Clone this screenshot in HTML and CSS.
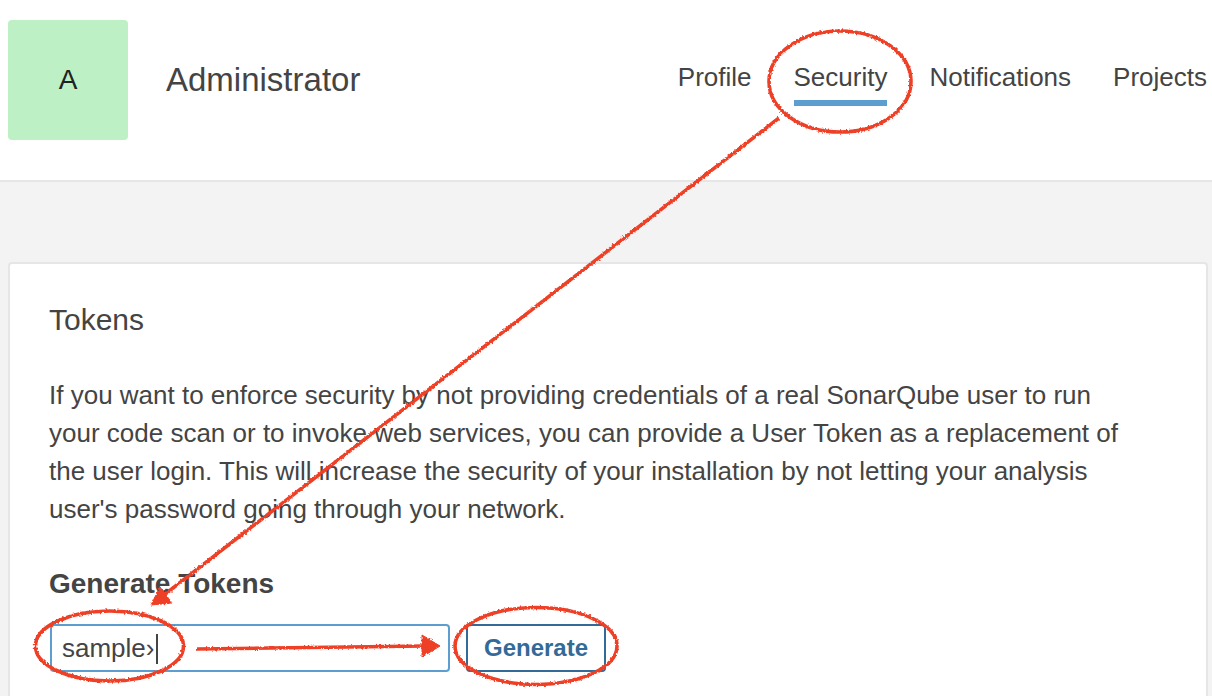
FILE: index.html
```html
<!DOCTYPE html>
<html lang="en">
<head>
<meta charset="utf-8">
<title>Administrator - Security</title>
<meta name="viewport" content="width=device-width">
<link rel="stylesheet" href="styles.css">
</head>
<body>
<header class="account-header">
  <div class="avatar">A</div>
  <h1 class="account-name">Administrator</h1>
  <nav class="account-nav">
    <a href="#profile">Profile</a>
    <a href="#security" class="active" aria-current="page">Security</a>
    <a href="#notifications">Notifications</a>
    <a href="#projects">Projects</a>
  </nav>
</header>
<main class="account-body">
  <section class="card">
    <h2 class="card-title">Tokens</h2>
    <p class="description">If you want to enforce security by not providing credentials of a real SonarQube user to run your code scan or to invoke web services, you can provide a User Token as a replacement of the user login. This will increase the security of your installation by not letting your analysis user's password going through your network.</p>
    <h3 class="form-title" id="generate-title">Generate Tokens</h3>
    <form class="token-form">
      <div class="field">
        <input class="token-name" type="text" value="sample›" aria-labelledby="generate-title">
        <span class="caret"></span>
      </div>
      <button class="generate" type="button">Generate</button>
    </form>
  </section>
</main>
<svg class="annotations" width="1212" height="696" viewBox="0 0 1212 696" aria-hidden="true">
  <defs>
    <filter id="chalk" filterUnits="userSpaceOnUse" x="0" y="0" width="1212" height="696">
      <feTurbulence type="fractalNoise" baseFrequency="0.5" numOctaves="2" seed="4" result="noise"/>
      <feDisplacementMap in="SourceGraphic" in2="noise" scale="3" xChannelSelector="R" yChannelSelector="G"/>
    </filter>
  </defs>
  <g filter="url(#chalk)" fill="none" stroke="#ee4026" stroke-width="3.6">
    <ellipse cx="840" cy="81.500" rx="71" ry="50.500"/>
    <ellipse cx="109.500" cy="646" rx="74" ry="35"/>
    <ellipse cx="536" cy="646" rx="81" ry="38.500"/>
    <path d="M779 118 164 595"/>
    <path d="M197 649 425 646"/>
    <path d="M151 605 160 587 172 603Z" fill="#ee4026" stroke-width="1"/>
    <path d="M422 635 440 646 422 657Z" fill="#ee4026" stroke-width="1"/>
  </g>
</svg>
</body>
</html>
```
FILE: styles.css
```css
* {
  box-sizing: border-box;
}

body {
  position: relative;
  display: flex;
  flex-direction: column;
  min-height: 100vh;
  margin: 0;
  background: #f3f3f3;
  color: #444;
  font: 26px/38px "Liberation Sans", Arial, sans-serif;
}

h1, h2, h3, p {
  margin: 0;
}

.account-header {
  display: flex;
  align-items: center;
  padding: 20px 5px 40px 8px;
  background: #fff;
  border-bottom: 2px solid #e6e6e6;
}

.avatar {
  display: grid;
  place-items: center;
  width: 120px;
  height: 120px;
  margin-right: 38px;
  border-radius: 4px;
  background: #bdf0c4;
  color: #222;
  font-size: 28px;
}

.account-name {
  font-size: 33px;
  font-weight: 400;
}

.account-nav {
  display: flex;
  align-self: flex-start;
  gap: 42px;
  margin-top: 38px;
  margin-left: auto;
}

.account-nav a {
  padding-bottom: 4px;
  border-bottom: 6px solid transparent;
  color: inherit;
  text-decoration: none;
}

.account-nav .active {
  border-color: #5c9ecf;
}

.account-body {
  display: flex;
  flex: 1;
  flex-direction: column;
  padding: 80px 4px 0 8px;
}

.card {
  flex: 1;
  padding: 38px 39px 24px;
  border: 2px solid #e6e6e6;
  border-bottom: 0;
  border-radius: 4px 4px 0 0;
  background: #fff;
}

.card-title,
.form-title {
  font-size: 28px;
  line-height: 36px;
}

.card-title {
  font-size: 30px;
  font-weight: 400;
}

.description {
  max-width: 1090px;
  margin: 38px 0;
}

.token-form {
  display: flex;
  gap: 16px;
  margin: 22px 1px 0;
}

.field {
  position: relative;
  width: 400px;
}

.token-name,
.generate {
  height: 48px;
  border: 2px solid #5c9ecf;
  border-radius: 4px;
  background: #fff;
  color: #444;
  font: inherit;
}

.token-name {
  display: block;
  width: 100%;
  padding: 0 10px;
  outline: 0;
}

.caret {
  position: absolute;
  top: 10px;
  left: 106px;
  width: 2px;
  height: 30px;
  background: #444;
}

.generate {
  padding: 0 16px;
  border-color: #336a98;
  color: #336a98;
  font-size: 24px;
  font-weight: 700;
}

.annotations {
  position: absolute;
  top: 0;
  left: 0;
  pointer-events: none;
}
```
